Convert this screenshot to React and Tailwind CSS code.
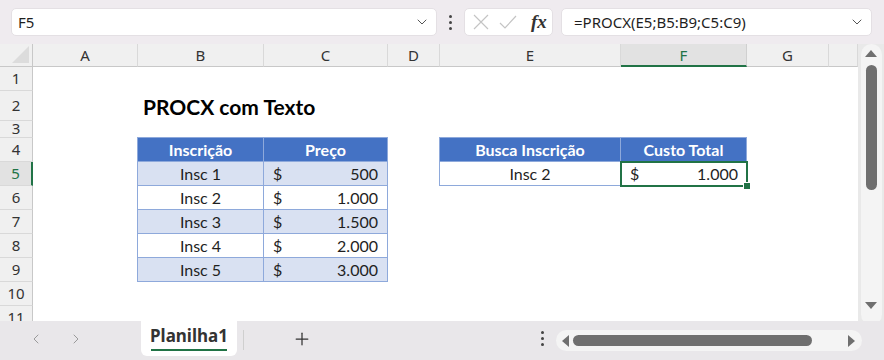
import React from 'react';
import { ChevronDown, ChevronLeft, ChevronRight, Plus } from 'lucide-react';

const cols = ['A', 'B', 'C', 'D', 'E', 'F', 'G', ''];
const rows = [1, 2, 3, 4, 5, 6, 7, 8, 9, 10, 11];

const rowStart = {
  1: 'row-start-2', 2: 'row-start-3', 3: 'row-start-4', 4: 'row-start-5', 5: 'row-start-6', 6: 'row-start-7',
  7: 'row-start-8', 8: 'row-start-9', 9: 'row-start-10', 10: 'row-start-11', 11: 'row-start-12'
};

const prices = [
  { name: 'Insc 1', value: '500' },
  { name: 'Insc 2', value: '1.000' },
  { name: 'Insc 3', value: '1.500' },
  { name: 'Insc 4', value: '2.000' },
  { name: 'Insc 5', value: '3.000' },
];

const cellFont = { fontFamily: 'Lato, "Open Sans", sans-serif' };
const uiFont = { fontFamily: '"Noto Sans", "Open Sans", sans-serif' };

const Dots = () => (
  <div className="flex flex-col gap-[3px] items-center">
    <span className="w-[3px] h-[3px] bg-[#444] rounded-full" />
    <span className="w-[3px] h-[3px] bg-[#444] rounded-full" />
    <span className="w-[3px] h-[3px] bg-[#444] rounded-full" />
  </div>
);

const Money = ({ value }) => (
  <div className="flex justify-between items-center px-[9px] w-full">
    <span>$</span>
    <span>{value}</span>
  </div>
);

export default function App() {
  return (
    <div className="w-[884px] h-[360px] flex flex-col bg-[#efebef] overflow-hidden text-[#1f1f1f]" style={uiFont}>
      {/* formula bar */}
      <div className="h-[44px] flex items-center pl-[11px] pr-[12px]">
        <div className="w-[426px] h-[28px] bg-white rounded-[5px] border border-[#e4e0e4] flex items-center justify-between pl-[6px] pr-[6px] text-[15px]">
          <span>F5</span>
          <ChevronDown className="w-[16px] h-[16px] text-[#555]" strokeWidth={1.5} />
        </div>
        <div className="w-[27px] flex justify-center">
          <Dots />
        </div>
        <div className="w-[89px] h-[28px] bg-white rounded-[5px] border border-[#e4e0e4] flex items-center pl-[6px] gap-[7px]">
          <svg width="20" height="20" viewBox="0 0 20 20" fill="none" stroke="#c4c4c4" strokeWidth="1.2">
            <path d="M3 3L17 17M17 3L3 17" />
          </svg>
          <svg width="20" height="20" viewBox="0 0 20 20" fill="none" stroke="#c4c4c4" strokeWidth="1.2">
            <path d="M2 11L7 16L18 4" />
          </svg>
          <span className="ml-[6px] text-[19px] italic font-bold text-[#333]" style={{ fontFamily: '"Liberation Serif", serif' }}>fx</span>
        </div>
        <div className="ml-[8px] flex-1 h-[28px] bg-white rounded-[5px] border border-[#e4e0e4] flex items-center justify-between pl-[12px] pr-[6px] text-[15px]">
          <span>=PROCX(E5;B5:B9;C5:C9)</span>
          <ChevronDown className="w-[16px] h-[16px] text-[#555]" strokeWidth={1.5} />
        </div>
      </div>

      {/* sheet */}
      <div className="h-[277px] flex">
        <div className="w-[858px] h-[277px] overflow-hidden bg-white">
          <div className="grid grid-cols-[33px_105px_126px_124px_52px_181px_126px_82px_29px] grid-rows-[23px_24px_30px_17px_24px_24px_24px_24px_24px_24px_24px_24px]">
            <div className="bg-[#f0f0f0] border-r border-b border-[#c8c8c8] relative overflow-hidden">
              <div className="absolute right-[3px] bottom-[3px] w-0 h-0 border-l-[17px] border-l-transparent border-b-[17px] border-b-[#dcdcdc]" />
            </div>
            {cols.map((c, i) =>
              c === 'F' ? (
                <div key={i} className="bg-[#e2e2e2] border-b-2 border-[#217346] border-r border-r-[#d0d0d0] flex items-center justify-center text-[15px] text-[#217346] pt-[2px]">
                  {c}
                </div>
              ) : (
                <div key={i} className="bg-[#f0f0f0] border-b border-[#c8c8c8] border-r border-r-[#d9d9d9] flex items-center justify-center text-[15px] text-[#333]">
                  {c}
                </div>
              )
            )}
            {rows.map((r) =>
              r === 5 ? (
                <div key={r} className={`col-start-1 ${rowStart[r]} bg-[#e2e2e2] border-r-2 border-[#217346] border-b border-b-[#d9d9d9] flex items-center justify-center text-[15px] text-[#217346]`}>
                  {r}
                </div>
              ) : (
                <div key={r} className={`col-start-1 ${rowStart[r]} bg-[#f0f0f0] border-r border-[#c8c8c8] border-b border-b-[#d9d9d9] flex ${r === 3 ? 'items-start leading-[14px]' : 'items-center'} justify-center text-[15px] text-[#333]`}>
                  {r}
                </div>
              )
            )}

            {/* title */}
            <div className="col-start-3 col-span-3 row-start-3 flex items-end pl-[5px] text-[21px] font-bold text-black leading-[28px]" style={cellFont}>
              PROCX com Texto
            </div>

            {/* price table */}
            <div className="col-start-3 col-span-2 row-start-5 row-span-6 grid grid-cols-[126px_124px] grid-rows-[24px_24px_24px_24px_24px_24px] border-l border-t border-[#8ea9db] -mt-px -ml-px text-[16px]" style={cellFont}>
              <div className="bg-[#4472c4] text-white font-bold flex items-center justify-center border-r border-b border-[#8ea9db]">Inscrição</div>
              <div className="bg-[#4472c4] text-white font-bold flex items-center justify-center border-r border-b border-[#8ea9db]">Preço</div>
              {prices.map((p, i) => (
                <React.Fragment key={p.name}>
                  <div className={`${i % 2 === 0 ? 'bg-[#d9e1f2]' : 'bg-white'} flex items-center justify-center border-r border-b border-[#8ea9db]`}>{p.name}</div>
                  <div className={`${i % 2 === 0 ? 'bg-[#d9e1f2]' : 'bg-white'} flex items-center border-r border-b border-[#8ea9db]`}>
                    <Money value={p.value} />
                  </div>
                </React.Fragment>
              ))}
            </div>

            {/* lookup table */}
            <div className="col-start-6 col-span-2 row-start-5 row-span-2 grid grid-cols-[181px_126px] grid-rows-[24px_24px] border-l border-t border-[#8ea9db] -mt-px -ml-px text-[16px]" style={cellFont}>
              <div className="bg-[#4472c4] text-white font-bold flex items-center justify-center border-r border-b border-[#8ea9db]">Busca Inscrição</div>
              <div className="bg-[#4472c4] text-white font-bold flex items-center justify-center border-r border-b border-[#8ea9db]">Custo Total</div>
              <div className="bg-white flex items-center justify-center border-r border-b border-[#8ea9db]">Insc 2</div>
              <div className="bg-white flex items-center relative">
                <Money value="1.000" />
                <div className="absolute -left-px -top-px -right-px -bottom-px border-2 border-[#217346]" />
                <div className="absolute -right-[4px] -bottom-[4px] w-[6px] h-[6px] bg-[#217346] border border-white box-content" />
              </div>
            </div>
          </div>
        </div>

        {/* vertical scrollbar */}
        <div className="w-[26px] bg-[#e9e9e9] flex justify-center">
          <div className="w-[21px] h-[281px] bg-[#f4f4f4] rounded-full flex flex-col items-center pt-[6px]">
            <div className="w-0 h-0 border-l-[6px] border-l-transparent border-r-[6px] border-r-transparent border-b-[7px] border-b-[#6f6f6f]" />
            <div className="w-[11px] h-[125px] bg-[#6f6f6f] rounded-full mt-[8px]" />
            <div className="flex-1" />
            <div className="w-0 h-0 border-l-[6px] border-l-transparent border-r-[6px] border-r-transparent border-t-[7px] border-t-[#6f6f6f] mb-[16px]" />
          </div>
        </div>
      </div>

      {/* sheet tabs */}
      <div className="h-[39px] bg-[#e9e7ea] flex items-start">
        <div className="w-[141px] h-[35px] flex items-center pl-[28px] gap-[24px] text-[#9a9a9a]">
          <ChevronLeft className="w-[16px] h-[16px]" strokeWidth={1.5} />
          <ChevronRight className="w-[16px] h-[16px]" strokeWidth={1.5} />
        </div>
        <div className="w-[96px] h-[35px] bg-white rounded-b-[6px] flex flex-col items-center justify-center">
          <span className="text-[17px] font-bold text-[#333] leading-[20px]" style={uiFont}>Planilha1</span>
          <span className="w-[76px] h-[2px] bg-[#217346] mt-[3px]" />
        </div>
        <div className="w-px h-[20px] bg-[#cfcfcf] mt-[9px] ml-[6px]" />
        <div className="w-[116px] h-[35px] flex items-center justify-center">
          <Plus className="w-[20px] h-[20px] text-[#333]" strokeWidth={1.5} />
        </div>
        <div className="flex-1" />
        <div className="w-[20px] h-[35px] flex items-center justify-center">
          <Dots />
        </div>
        <div className="ml-[4px] mr-[22px] mt-[9px] w-[306px] h-[21px] bg-[#f4f4f4] rounded-full flex items-center px-[6px]">
          <div className="w-0 h-0 border-t-[6px] border-t-transparent border-b-[6px] border-b-transparent border-r-[7px] border-r-[#6f6f6f]" />
          <div className="ml-[4px] w-[239px] h-[11px] bg-[#6f6f6f] rounded-full" />
          <div className="flex-1" />
          <div className="w-0 h-0 border-t-[6px] border-t-transparent border-b-[6px] border-b-transparent border-l-[7px] border-l-[#6f6f6f] mr-[1px]" />
        </div>
      </div>
    </div>
  );
}
